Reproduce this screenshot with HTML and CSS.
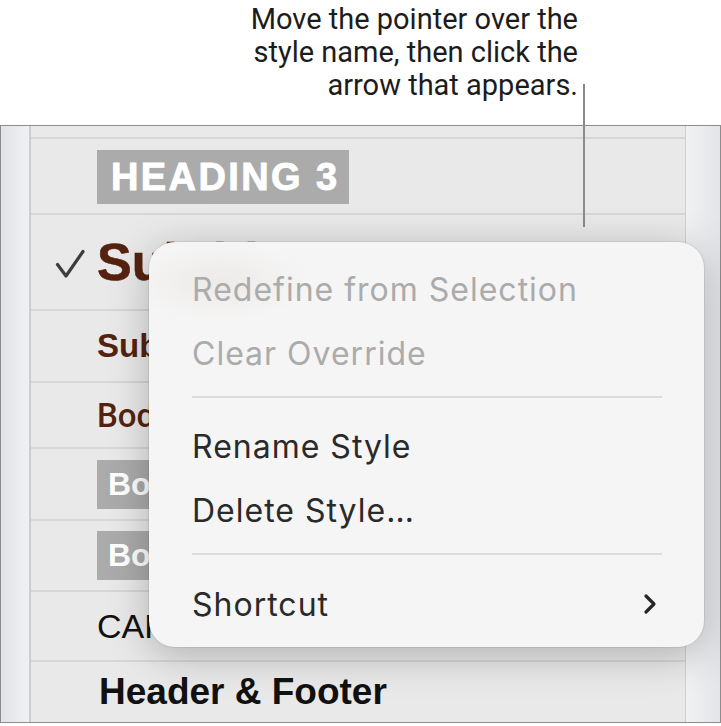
FILE: index.html
```html
<!DOCTYPE html>
<html lang="en">
<head>
  <meta charset="UTF-8" />
  <meta name="viewport" content="width=device-width, initial-scale=1.0"/>
  <title>Paragraph Styles</title>
  <link rel="stylesheet" href="styles.css">
</head>
<body>

  <div class="caption">
    Move the pointer over the<br>
    style name, then click the<br>
    arrow that appears.
  </div>
  <div class="leader"></div>

  <div class="panel">
    <div class="strip-left"></div>

    <div class="styles">
      <div class="row row-top"></div>
      <div class="row row-h3"><span class="tag tag-h3">HEADING 3</span></div>
      <div class="row row-sub checked">
        <svg class="check" width="30" height="30" viewBox="0 0 30 30">
          <path d="M2.5 15.5 L11 27 L28 2.5" fill="none" stroke="#3d3d3d" stroke-width="3.2" stroke-linecap="round" stroke-linejoin="round"/>
        </svg>
        <span class="name-subtitle">Subtitle</span>
      </div>
      <div class="row row-sub2"><span class="name-sub2">Subheading</span></div>
      <div class="row row-body"><span class="name-body">Body</span></div>
      <div class="row row-tag1"><span class="tag tag-body">Body Small</span></div>
      <div class="row row-tag2"><span class="tag tag-body">Body Bold</span></div>
      <div class="row row-caption"><span class="name-caption">CAPTION</span></div>
      <div class="row row-header"><span class="name-header">Header &amp; Footer</span></div>
    </div>

    <div class="strip-right"></div>
  </div>

  <div class="menu">
    <div class="item disabled">Redefine from Selection</div>
    <div class="item disabled">Clear Override</div>
    <div class="sep"></div>
    <div class="item">Rename Style</div>
    <div class="item">Delete Style…</div>
    <div class="sep sep-low"></div>
    <div class="item item-sub">
      Shortcut
      <svg class="chevron" width="14" height="22" viewBox="0 0 14 22">
        <path d="M3 3 L11 11 L3 19" fill="none" stroke="#262626" stroke-width="3.2" stroke-linecap="round" stroke-linejoin="round"/>
      </svg>
    </div>
  </div>

</body>
</html>
```

FILE: styles.css
```css
body {
  margin: 0;
  width: 721px;
  height: 726px;
  overflow: hidden;
  background: #ffffff;
  position: relative;
  font-family: 'Liberation Sans', Arial, sans-serif;
}

.caption {
  font-family: Roboto, 'Liberation Sans', sans-serif;
  font-size: 29px;
  line-height: 33px;
  color: #1c1c1c;
  text-align: right;
  padding: 3px 143px 0 0;
  height: 122px;
}

.leader {
  position: absolute;
  left: 583px;
  top: 84px;
  width: 2px;
  height: 143px;
  background: #8a8a8a;
}

.panel {
  display: flex;
  height: 596px;
  border: 1px solid #8c8c8c;
  background: #e9e9e9;
}

.strip-left {
  width: 28px;
  border-right: 2px solid #cdcdcf;
  background: linear-gradient(to right, #e2e3e6, #f0f1f3);
}

.strip-right {
  width: 34px;
  border-left: 1px solid #cfcfd1;
  background: linear-gradient(to right, #f1f2f4, #e3e4e7);
}

.styles {
  width: 654px;
  display: flex;
  flex-direction: column;
  background: #e9e9e9;
  overflow: hidden;
}

.row {
  box-sizing: border-box;
  display: flex;
  align-items: center;
  padding-left: 66px;
  border-top: 2px solid #d6d6d6;
  flex: none;
  white-space: nowrap;
}

.row-top { height: 11px; border-top: none; }
.row-h3 { height: 76px; }
.row-sub { height: 96px; }
.row-sub2 { height: 72px; }
.row-body { height: 66px; }
.row-tag1 { height: 72px; }
.row-tag2 { height: 71px; }
.row-caption { height: 70px; }
.row-header { height: 62px; }

.row.checked {
  padding-left: 24px;
  gap: 12px;
}

.check { flex: none; margin-top: 3px; }

.tag {
  display: inline-block;
  background: #ababab;
  color: #ffffff;
  font-weight: bold;
}

.tag-h3 {
  font-size: 38px;
  letter-spacing: 2.4px;
  line-height: 54px;
  height: 54px;
  padding: 0 9px 0 14px;
  margin-top: 2px;
  -webkit-text-stroke: 0.9px #ffffff;
}

.tag-body {
  font-size: 32px;
  line-height: 49px;
  padding: 0 12px 0 11px;
}

.name-subtitle {
  font-size: 52px;
  line-height: 60px;
  font-weight: bold;
  color: #55220f;
  -webkit-text-stroke: 0.6px #55220f;
}

.name-sub2 {
  font-size: 33px;
  font-weight: bold;
  color: #55220f;
}

.name-body {
  font-family: Roboto, 'Liberation Sans', sans-serif;
  font-size: 33px;
  font-weight: 500;
  color: #55220f;
}

.name-caption {
  font-size: 34px;
  color: #111111;
}

.name-header {
  font-size: 37px;
  font-weight: bold;
  color: #111111;
  margin-left: 2px;
}

.menu {
  position: absolute;
  left: 149px;
  top: 242px;
  width: 555px;
  height: 405px;
  box-sizing: border-box;
  padding: 15px 42px 0 43px;
  border-radius: 26px;
  background:
    radial-gradient(ellipse 90px 40px at 70px 40px, rgba(170, 140, 125, 0.10), rgba(170, 140, 125, 0) 100%),
    #f5f5f5;
  box-shadow: 0 0 0 1px rgba(0, 0, 0, 0.07), 0 8px 40px rgba(0, 0, 0, 0.25);
  font-family: Inter, Roboto, sans-serif;
  font-size: 32px;
  letter-spacing: 1px;
  color: #2a2a2a;
}

.item {
  height: 64px;
  display: flex;
  align-items: center;
  justify-content: space-between;
}

.item.disabled { color: #ababab; }

.sep {
  height: 2px;
  background: #dcdcdc;
  margin: 11px 0 16px;
}

.sep-low { margin: 11px 0 17px; }

.chevron { margin-right: 5px; }
```
